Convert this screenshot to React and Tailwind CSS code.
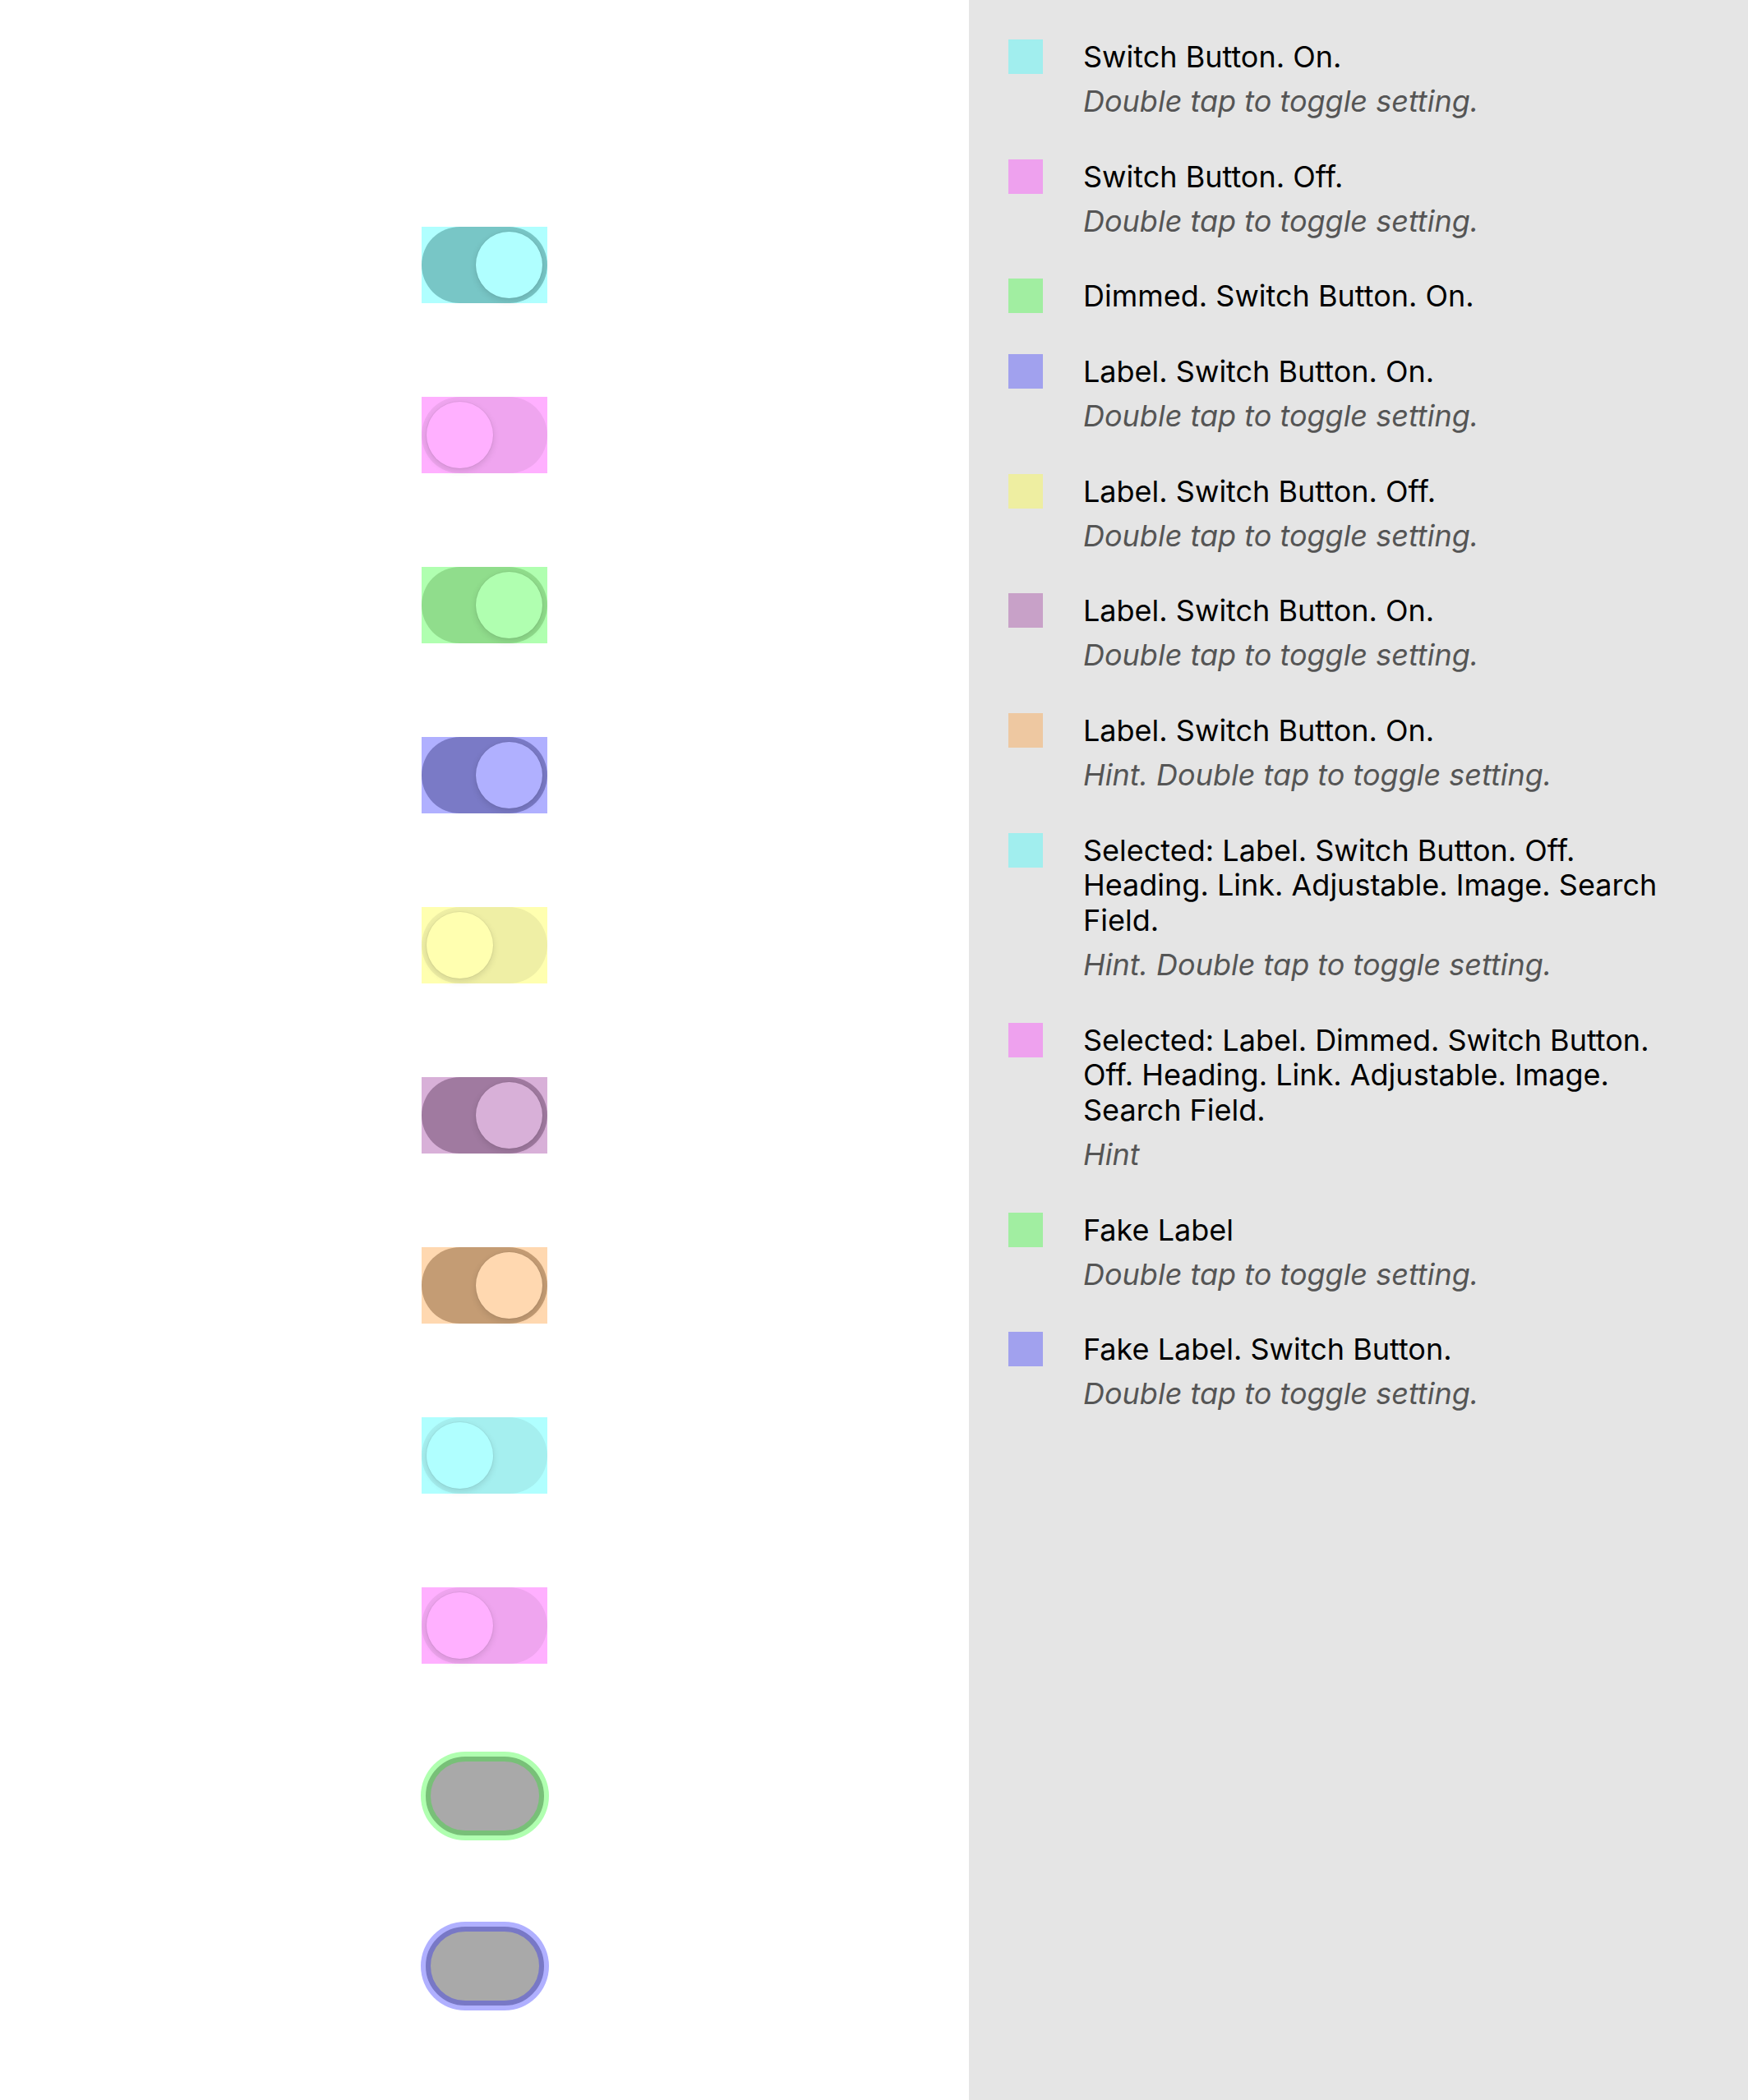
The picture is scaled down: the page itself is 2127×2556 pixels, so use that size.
import React from "react";

// switches on the left, each one tinted by its highlight colour
const switches = [
  { kind: "switch", on: true, overlay: "bg-[#b0ffff]", track: "bg-[#78c6c6]" },
  { kind: "switch", on: false, overlay: "bg-[#ffb0ff]", track: "bg-[#efa5ef]" },
  { kind: "switch", on: true, overlay: "bg-[#b0ffb0]", track: "bg-[#90dd8c]" },
  { kind: "switch", on: true, overlay: "bg-[#b0b0ff]", track: "bg-[#7a7ac6]" },
  { kind: "switch", on: false, overlay: "bg-[#ffffb0]", track: "bg-[#efefa5]" },
  { kind: "switch", on: true, overlay: "bg-[#d8b0d8]", track: "bg-[#a07aa0]" },
  { kind: "switch", on: true, overlay: "bg-[#ffd8b0]", track: "bg-[#c49c74]" },
  { kind: "switch", on: false, overlay: "bg-[#b0ffff]", track: "bg-[#a5efef]" },
  { kind: "switch", on: false, overlay: "bg-[#ffb0ff]", track: "bg-[#efa5ef]" },
  { kind: "fake", outer: "bg-[#b0ffb0]", ring: "border-[#78c078]" },
  { kind: "fake", outer: "bg-[#b0b0ff]", ring: "border-[#7878c6]" },
];

const items = [
  { color: "bg-[#a1eeee]", title: "Switch Button. On.", hint: "Double tap to toggle setting." },
  { color: "bg-[#eea1ee]", title: "Switch Button. Off.", hint: "Double tap to toggle setting." },
  { color: "bg-[#a1eea1]", title: "Dimmed. Switch Button. On." },
  { color: "bg-[#a1a1ee]", title: "Label. Switch Button. On.", hint: "Double tap to toggle setting." },
  { color: "bg-[#eeeea1]", title: "Label. Switch Button. Off.", hint: "Double tap to toggle setting." },
  { color: "bg-[#c8a1c8]", title: "Label. Switch Button. On.", hint: "Double tap to toggle setting." },
  { color: "bg-[#eec8a1]", title: "Label. Switch Button. On.", hint: "Hint. Double tap to toggle setting." },
  {
    color: "bg-[#a1eeee]",
    title: "Selected: Label. Switch Button. Off. Heading. Link. Adjustable. Image. Search Field.",
    hint: "Hint. Double tap to toggle setting.",
  },
  {
    color: "bg-[#eea1ee]",
    title: "Selected: Label. Dimmed. Switch Button. Off. Heading. Link. Adjustable. Image. Search Field.",
    hint: "Hint",
  },
  { color: "bg-[#a1eea1]", title: "Fake Label", hint: "Double tap to toggle setting." },
  { color: "bg-[#a1a1ee]", title: "Fake Label. Switch Button.", hint: "Double tap to toggle setting." },
];

function Toggle({ s }) {
  if (s.kind === "fake") {
    return (
      <div className={"w-[156px] h-[108px] rounded-full p-[6px] " + s.outer}>
        <div className={"w-full h-full rounded-full border-[6px] bg-[#a9a9a9] " + s.ring}></div>
      </div>
    );
  }
  return (
    <div className={"w-[153px] h-[93px] " + s.overlay}>
      <div
        className={
          "w-full h-full rounded-full p-[6px] flex items-center " +
          (s.on ? "justify-end " : "justify-start ") +
          s.track
        }
      >
        <div
          className={
            "w-[81px] h-[81px] rounded-full shadow-[0_3px_8px_rgba(0,0,0,0.12),0_0_0_1px_rgba(0,0,0,0.04)] " +
            s.overlay
          }
        ></div>
      </div>
    </div>
  );
}

export default function App() {
  return (
    <div
      className="flex w-[2127px] h-[2556px] overflow-hidden"
      style={{ fontFamily: "Inter, 'Noto Sans', sans-serif" }}
    >
      <div className="w-[1179px] shrink-0 bg-white pt-[219px] flex flex-col">
        {switches.map((s, i) => (
          <div key={i} className="h-[207px] flex items-center justify-center">
            <Toggle s={s} />
          </div>
        ))}
      </div>

      <div className="flex-1 bg-[#e5e5e5] pl-[48px] pt-[48px] pr-[64px] flex flex-col gap-[49px]">
        {items.map((it, i) => (
          <div key={i} className="flex gap-[49px]">
            <div className={"w-[42px] h-[42px] shrink-0 " + it.color}></div>
            <div className="flex-1 min-w-0">
              <div className="text-[36px] leading-[42.67px] text-black">{it.title}</div>
              {it.hint && (
                <div className="mt-[11.33px] text-[36px] leading-[42.67px] italic text-[#555555]">
                  {it.hint}
                </div>
              )}
            </div>
          </div>
        ))}
      </div>
    </div>
  );
}
